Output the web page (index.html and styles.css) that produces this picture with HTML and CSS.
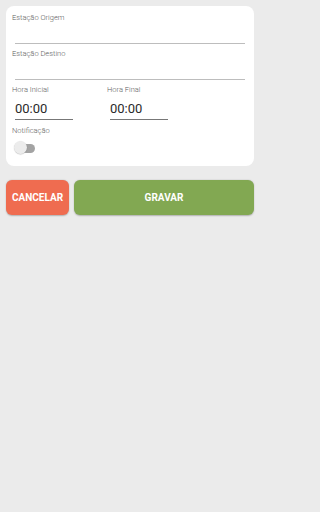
FILE: index.html
```html
<!DOCTYPE html>
<html lang="pt">
<head>
<meta charset="utf-8">
<link rel="stylesheet" href="styles.css">
</head>
<body>
<div class="page">
  <div class="card">
    <div class="field">
      <div class="label">Estação Origem</div>
      <div class="input"></div>
    </div>
    <div class="field">
      <div class="label">Estação Destino</div>
      <div class="input"></div>
    </div>
    <div class="times">
      <div class="time">
        <div class="label">Hora Inicial</div>
        <div class="time-input">00:00</div>
      </div>
      <div class="time">
        <div class="label">Hora Final</div>
        <div class="time-input">00:00</div>
      </div>
    </div>
    <div class="label notif">Notificação</div>
    <div class="switch"><span class="track"></span><span class="thumb"></span></div>
  </div>
  <div class="actions">
    <button class="btn cancel">CANCELAR</button>
    <button class="btn save">GRAVAR</button>
  </div>
</div>
</body>
</html>
```
FILE: styles.css
```css
* { box-sizing: border-box; }
html, body { margin: 0; padding: 0; background: #ebebeb; }
body {
  font-family: Roboto, "Liberation Sans", sans-serif;
  min-height: 512px;
}
.page { padding: 6px; width: 260px; }
.card {
  background: #ffffff;
  border-radius: 8px;
  padding: 7px 9px 12px 6px;
  height: 160px;
}
.label {
  font-size: 7.5px;
  font-weight: 300;
  color: #5e5e5e;
  line-height: 10px;
}
.field { margin-bottom: 5px; }
.input {
  margin-left: 3px;
  height: 21px;
  border-bottom: 1px solid #bdbdbd;
}
.times { display: flex; }
.time { width: 95px; }
.time-input {
  margin-left: 3px;
  margin-top: 6px;
  width: 58px;
  font-size: 13px;
  line-height: 15px;
  color: #2a2a2a;
  padding-bottom: 3px;
  border-bottom: 1px solid #777;
}
.notif { margin-top: 6px; }
.switch {
  position: relative;
  width: 22px;
  height: 14px;
  margin-top: 5px;
  margin-left: 2px;
}
.track {
  position: absolute;
  left: 8px;
  top: 3px;
  width: 13px;
  height: 9px;
  border-radius: 5px;
  background: #a3a3a3;
}
.thumb {
  position: absolute;
  left: 0;
  top: 0;
  width: 13px;
  height: 13px;
  border-radius: 50%;
  background: #ececec;
  box-shadow: 0 0.5px 1px rgba(0,0,0,0.25);
}
.actions {
  display: flex;
  gap: 5px;
  margin-top: 14px;
}
.btn {
  border: none;
  border-radius: 6px;
  height: 35px;
  color: #fff;
  font-family: Roboto, "Liberation Sans", sans-serif;
  font-weight: 700;
  font-size: 10px;
  padding: 0;
  box-shadow: 0 0.5px 1.5px rgba(0,0,0,0.25);
}
.cancel { width: 63px; background: #ef6c50; }
.save { flex: 1; background: #82a852; }
```
